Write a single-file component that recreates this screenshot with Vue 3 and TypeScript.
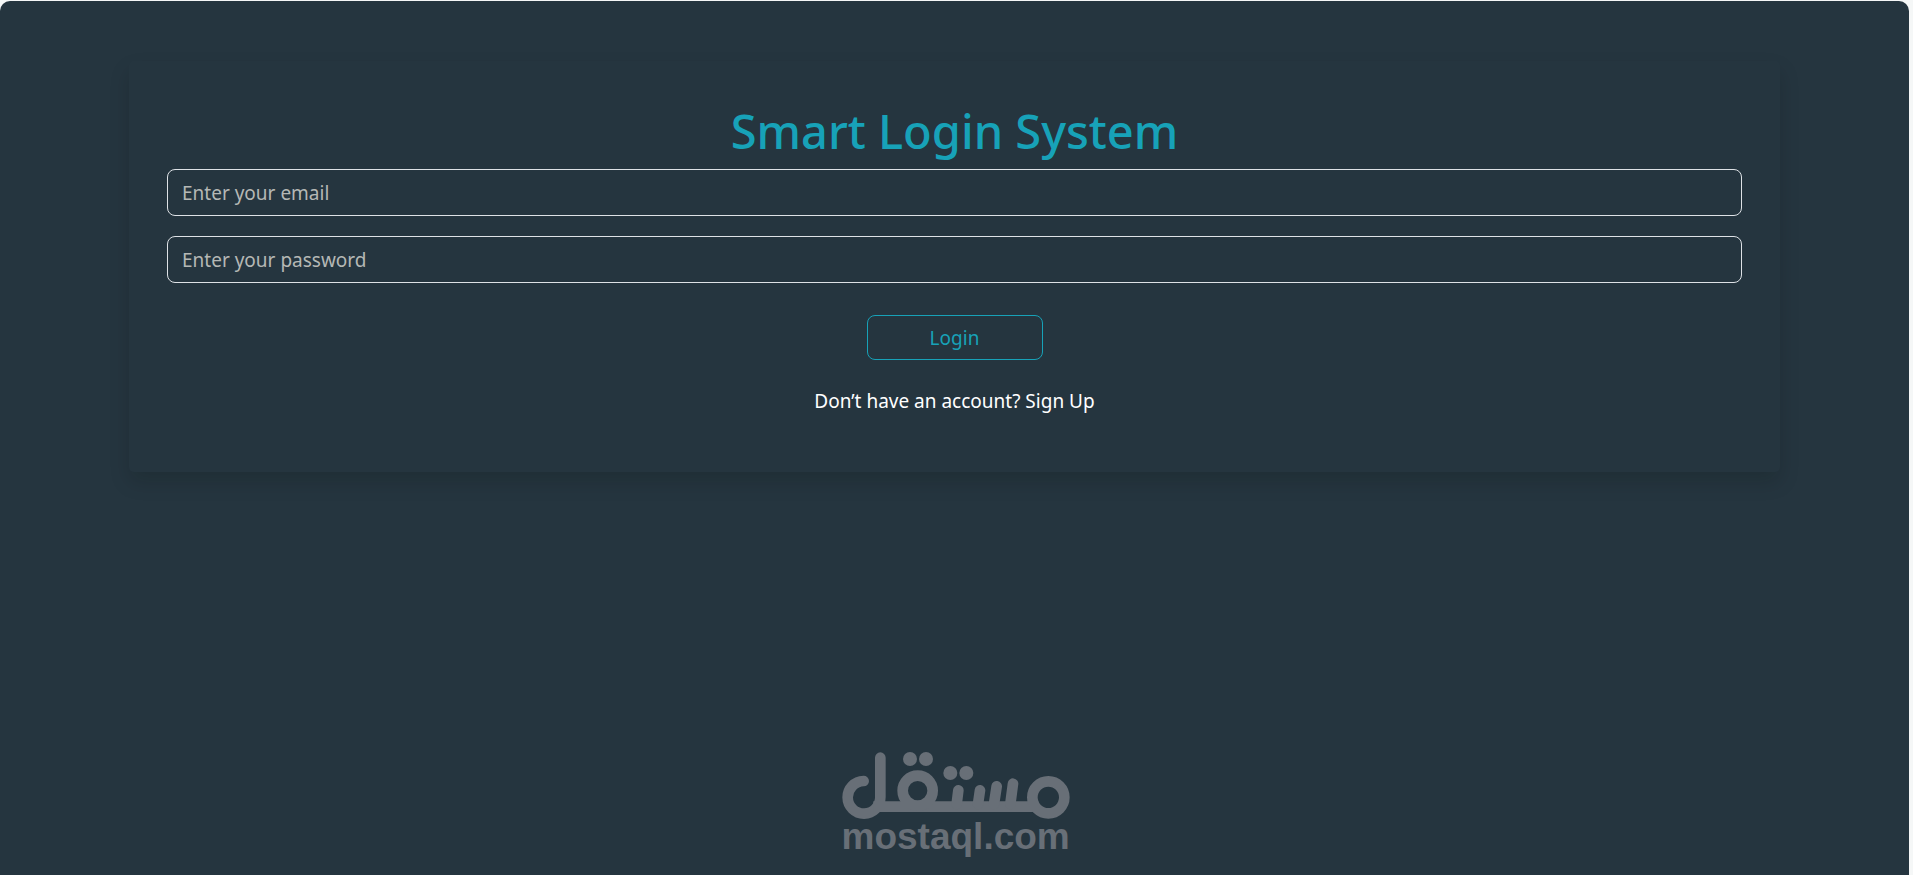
<script setup lang="ts">
import { ref } from 'vue'

const email = ref('')
const password = ref('')
</script>

<template>
  <div class="frame">
    <main class="page">
      <form class="card" @submit.prevent>
        <h1>Smart Login System</h1>
        <input v-model="email" class="field" type="email" placeholder="Enter your email" aria-label="Email" />
        <input v-model="password" class="field" type="password" placeholder="Enter your password" aria-label="Password" />
        <button class="login" type="submit">Login</button>
        <p class="signup">Don’t have an account? <a href="#signup">Sign Up</a></p>
      </form>
      <svg class="watermark" viewBox="0 0 810 405" role="img" aria-label="مستقل mostaql.com">
        <g fill="none" stroke="#686f77" stroke-width="32" stroke-linecap="round">
          <path d="M131 138A49 49 0 1 0 181 187V68" />
          <path d="M160 215H655" stroke-linecap="butt" />
          <circle cx="293" cy="167" r="45" />
          <path d="M415 166L410 207M480 166L474 207M530 154L522 207M579 146L571 207" />
          <circle cx="685" cy="187" r="48" />
        </g>
        <g fill="#686f77">
          <circle cx="270" cy="72" r="21" />
          <circle cx="318" cy="72" r="21" />
          <circle cx="391" cy="114" r="21" />
          <circle cx="439" cy="114" r="21" />
          <text x="407" y="342" text-anchor="middle">mostaql.com</text>
        </g>
      </svg>
    </main>
  </div>
</template>

<style>
body {
  margin: 0;
  background: #f5f7f7;
}
</style>

<style scoped>
.frame {
  box-sizing: border-box;
  min-height: 100vh;
  display: flex;
  padding: 1px 4px 0 0;
  font-family: "Segoe UI", "Noto Sans", sans-serif;
  font-size: 19px;
  line-height: 30px;
}
.page {
  box-sizing: border-box;
  position: relative;
  flex: 1;
  padding: 60px 129px 0;
  border-radius: 10px 10px 0 0;
  background: #25353f;
}
.card {
  display: flex;
  flex-direction: column;
  align-items: center;
  padding: 40px 38px 36px;
  border-radius: 5px;
  box-shadow: 0 10px 20px rgba(8, 12, 0, 0.15);
}
h1 {
  margin: 0 0 8px;
  color: #17a2b8;
  font-size: 47px;
  font-weight: 500;
  line-height: 60px;
}
.field {
  box-sizing: border-box;
  width: 100%;
  height: 47px;
  margin: 0 0 20px;
  padding: 0 14px;
  border: 1px solid #dee2e6;
  border-radius: 8px;
  background: transparent;
  color: #fff;
  font: inherit;
}
.field::placeholder {
  color: #b5b8b5;
  opacity: 1;
}
.login {
  width: 176px;
  height: 45px;
  margin: 12px 0 0;
  padding: 0;
  border: 1px solid #17a2b8;
  border-radius: 8px;
  background: transparent;
  color: #17a2b8;
  font: inherit;
}
.signup {
  margin: 26px 0 20px;
  color: #fff;
}
.signup a {
  color: inherit;
  text-decoration: none;
}
.watermark {
  position: absolute;
  bottom: 5px;
  left: 50%;
  width: 270px;
  height: 135px;
  transform: translateX(-50%);
}
.watermark text {
  font-family: "Liberation Sans", Arial, sans-serif;
  font-size: 111px;
  font-weight: 700;
}
</style>
